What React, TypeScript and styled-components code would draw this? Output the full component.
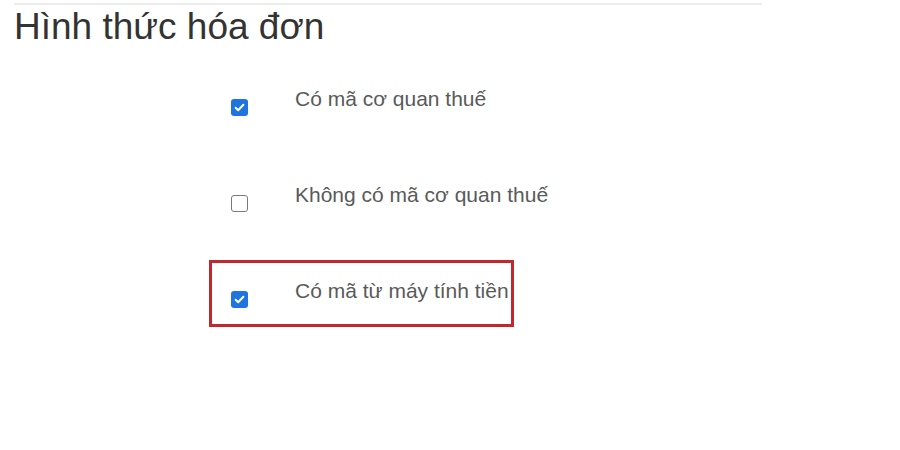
import styled, { createGlobalStyle } from "styled-components";

const GlobalStyle = createGlobalStyle`
    body {
        margin: 0;
        background: #ffffff;
        font-family: "Liberation Sans", Arial, sans-serif;
    }
`;

const options = [
    { label: "Có mã cơ quan thuế", checked: true, highlighted: false },
    { label: "Không có mã cơ quan thuế", checked: false, highlighted: false },
    { label: "Có mã từ máy tính tiền", checked: true, highlighted: true },
];

const App = () => {
    return (
        <>
            <GlobalStyle />
            <PageWrapper>
                <TopRule />
                <Title>Hình thức hóa đơn</Title>
                <OptionList>
                    {options.map((option) => (
                        <OptionRow key={option.label} $highlighted={option.highlighted}>
                            <CheckBox $checked={option.checked}>
                                {option.checked && (
                                    <svg viewBox="0 0 16 16" width="13" height="13">
                                        <path
                                            d="M3.2 8.4 L6.4 11.4 L12.8 4.6"
                                            fill="none"
                                            stroke="#ffffff"
                                            strokeWidth="2.4"
                                            strokeLinecap="round"
                                            strokeLinejoin="round"
                                        />
                                    </svg>
                                )}
                            </CheckBox>
                            <OptionLabel>{option.label}</OptionLabel>
                        </OptionRow>
                    ))}
                </OptionList>
            </PageWrapper>
        </>
    );
};

const PageWrapper = styled.main`
    display: flex;
    flex-direction: column;
    padding: 3px 0 0 14px;
    width: 900px;
    height: 450px;
    box-sizing: border-box;
`;

const TopRule = styled.div`
    width: 748px;
    height: 2px;
    background: #ececec;
`;

const Title = styled.h1`
    margin: 0;
    padding-top: 1px;
    font-size: 37px;
    line-height: 41px;
    font-weight: 400;
    color: #333333;
`;

const OptionList = styled.div`
    display: flex;
    flex-direction: column;
    gap: 29px;
    margin: 21px 0 0 195px;
`;

const OptionRow = styled.label<{ $highlighted: boolean }>`
    display: flex;
    align-items: flex-start;
    width: 305px;
    height: 67px;
    box-sizing: border-box;
    padding: 16px 0 0 19px;
    border: 3px solid ${(p) => (p.$highlighted ? "#c1272d" : "transparent")};
`;

const CheckBox = styled.span<{ $checked: boolean }>`
    display: flex;
    align-items: center;
    justify-content: center;
    flex-shrink: 0;
    width: 17px;
    height: 17px;
    margin-top: 12px;
    box-sizing: border-box;
    border-radius: 3px;
    background: ${(p) => (p.$checked ? "#1f74e0" : "#ffffff")};
    border: ${(p) => (p.$checked ? "none" : "1.5px solid #7a7a7a")};
`;

const OptionLabel = styled.span`
    margin-left: 47px;
    font-size: 21px;
    line-height: 24px;
    color: #5a5a5a;
    white-space: nowrap;
`;

export default App;
